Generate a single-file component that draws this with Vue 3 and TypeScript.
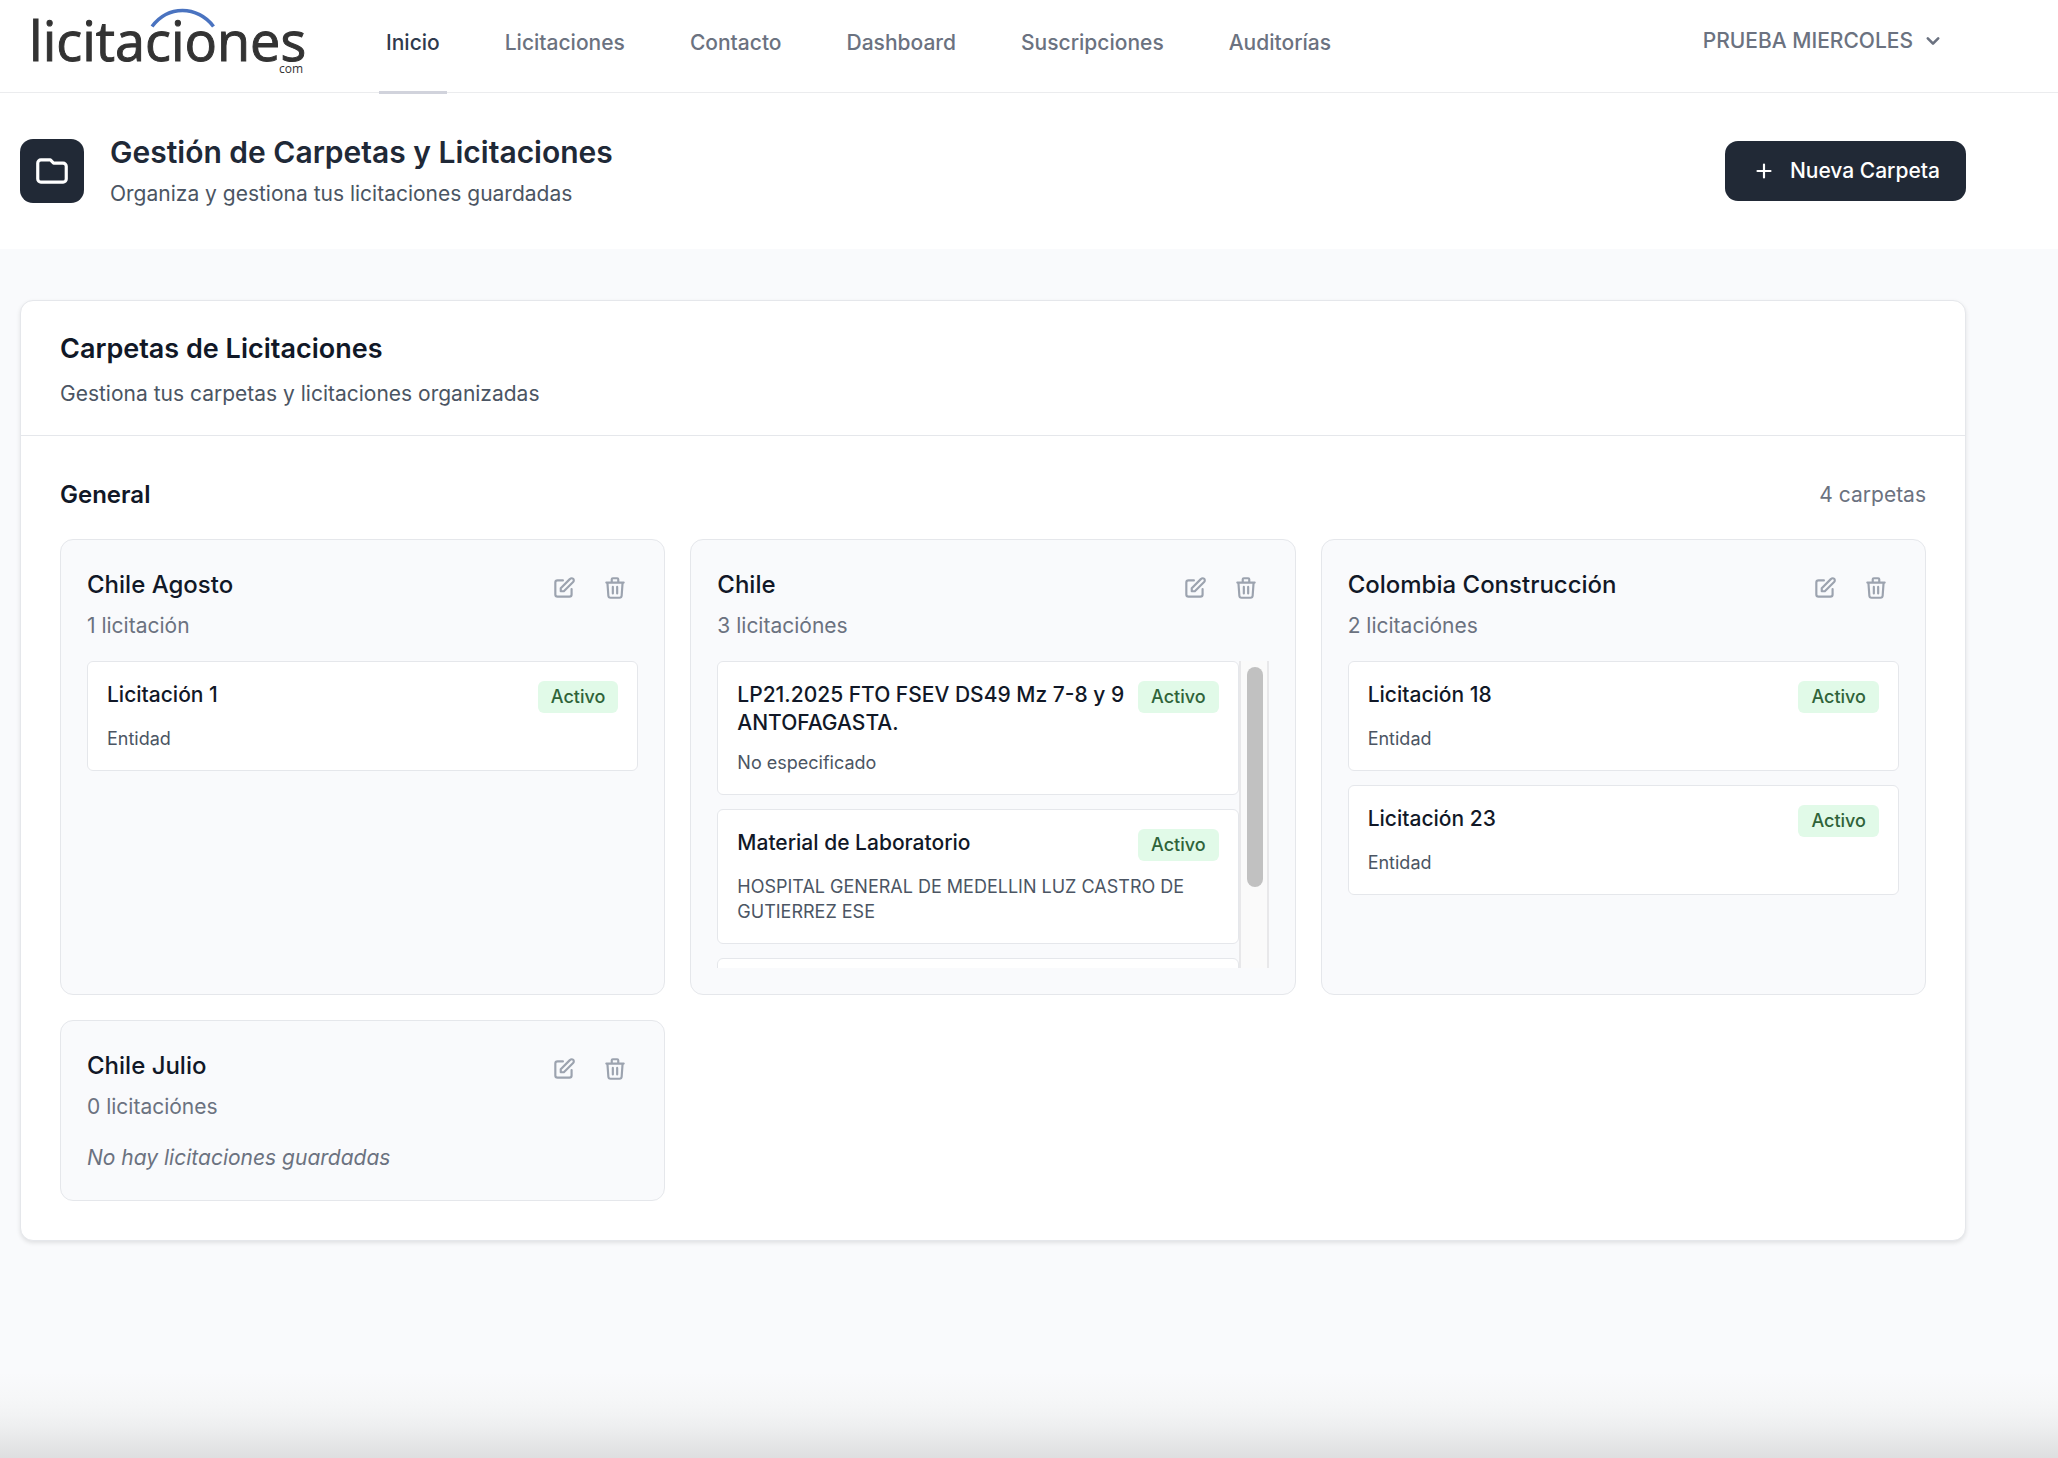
<script setup lang="ts">
interface Tender {
  title: string
  entity: string
}

interface Folder {
  name: string
  count: string
  tenders: Tender[]
  scrollable?: boolean
}

const links: string[] = ['Inicio', 'Licitaciones', 'Contacto', 'Dashboard', 'Suscripciones', 'Auditorías']

const folders: Folder[] = [
  { name: 'Chile Agosto', count: '1 licitación', tenders: [{ title: 'Licitación 1', entity: 'Entidad' }] },
  {
    name: 'Chile',
    count: '3 licitaciónes',
    scrollable: true,
    tenders: [
      { title: 'LP21.2025 FTO FSEV DS49 Mz 7-8 y 9 ANTOFAGASTA.', entity: 'No especificado' },
      { title: 'Material de Laboratorio', entity: 'HOSPITAL GENERAL DE MEDELLIN LUZ CASTRO DE GUTIERREZ ESE' },
      { title: '', entity: '' },
    ],
  },
  {
    name: 'Colombia Construcción',
    count: '2 licitaciónes',
    tenders: [
      { title: 'Licitación 18', entity: 'Entidad' },
      { title: 'Licitación 23', entity: 'Entidad' },
    ],
  },
  { name: 'Chile Julio', count: '0 licitaciónes', tenders: [] },
]
</script>

<template>
  <div class="page">
    <header class="topbar">
      <a class="logo" href="#" aria-label="licitaciones.com">
        <svg width="280" height="82" viewBox="0 0 280 82">
          <path d="M123 26.5C131 16 142 10.500 153.500 10.500S177 16 184.500 26.500" fill="none" stroke="#4a73c0" stroke-width="3.500" />
          <text class="logo-name" x="0" y="61">licitaciones</text>
          <text class="logo-tld" x="274" y="73" text-anchor="end">com</text>
        </svg>
      </a>
      <nav class="nav">
        <a v-for="(link, i) in links" :key="link" href="#" :class="['nav-link', { active: i === 0 }]">{{ link }}</a>
      </nav>
      <button type="button" class="user">
        PRUEBA MIERCOLES
        <svg width="26" height="26" viewBox="0 0 20 20" fill="currentColor">
          <path fill-rule="evenodd" clip-rule="evenodd" d="M5.293 7.293a1 1 0 011.414 0L10 10.586l3.293-3.293a1 1 0 111.414 1.414l-4 4a1 1 0 01-1.414 0l-4-4a1 1 0 010-1.414z" />
        </svg>
      </button>
    </header>

    <section class="heading">
      <div class="heading-icon">
        <svg class="icon" width="38" height="38" viewBox="0 0 24 24">
          <path d="M3 7v10a2 2 0 002 2h14a2 2 0 002-2V9a2 2 0 00-2-2h-6l-2-2H5a2 2 0 00-2 2z" />
        </svg>
      </div>
      <div class="heading-text">
        <h1>Gestión de Carpetas y Licitaciones</h1>
        <p>Organiza y gestiona tus licitaciones guardadas</p>
      </div>
      <button type="button" class="new-folder">
        <svg class="icon" width="26" height="26" viewBox="0 0 24 24">
          <path d="M12 6v12M6 12h12" />
        </svg>
        Nueva Carpeta
      </button>
    </section>

    <main>
      <section class="panel">
        <div class="panel-head">
          <h2>Carpetas de Licitaciones</h2>
          <p>Gestiona tus carpetas y licitaciones organizadas</p>
        </div>
        <div class="panel-body">
          <div class="group-head">
            <h3>General</h3>
            <span>4 carpetas</span>
          </div>
          <div class="grid">
            <article v-for="folder in folders" :key="folder.name" class="folder">
              <div class="folder-head">
                <div class="folder-text">
                  <h4>{{ folder.name }}</h4>
                  <p>{{ folder.count }}</p>
                </div>
                <button type="button" class="action" aria-label="Editar">
                  <svg class="icon" width="26" height="26" viewBox="0 0 24 24">
                    <path d="M11 5H6a2 2 0 00-2 2v11a2 2 0 002 2h11a2 2 0 002-2v-5m-1.414-9.414a2 2 0 112.828 2.828L11.828 15H9v-2.828l8.586-8.586z" />
                  </svg>
                </button>
                <button type="button" class="action" aria-label="Eliminar">
                  <svg class="icon" width="26" height="26" viewBox="0 0 24 24">
                    <path d="M19 7l-.867 12.142A2 2 0 0116.138 21H7.862a2 2 0 01-1.995-1.858L5 7m5 4v6m4-6v6m1-10V4a1 1 0 00-1-1h-4a1 1 0 00-1 1v3M4 7h16" />
                  </svg>
                </button>
              </div>
              <div v-if="folder.tenders.length" class="scroller">
                <ul class="tenders">
                  <li v-for="(tender, i) in folder.tenders" :key="i" class="tender">
                    <template v-if="tender.title">
                      <div class="tender-head">
                        <h5>{{ tender.title }}</h5>
                        <span class="badge">Activo</span>
                      </div>
                      <p>{{ tender.entity }}</p>
                    </template>
                  </li>
                </ul>
                <div v-if="folder.scrollable" class="track"><div class="thumb"></div></div>
              </div>
              <p v-else class="empty">No hay licitaciones guardadas</p>
            </article>
          </div>
        </div>
      </section>
    </main>
  </div>
</template>

<style>
body {
  margin: 0;
  background: #f9fafc;
}
</style>

<style scoped>
.page {
  display: flex;
  flex-direction: column;
  min-height: 100vh;
  font: 400 21px/32px Inter, 'Liberation Sans', sans-serif;
  color: #111827;
  background: linear-gradient(#f9fafc, #f6f7f8 30%, #f2f3f4 50%, #ebeced 70%, #e2e3e4 90%, #dedfe0) bottom / 100% 86px no-repeat #f9fafc;
}
h1, h2, h3, h4, h5, p, ul {
  margin: 0;
  padding: 0;
}
button {
  border: 0;
  background: none;
  padding: 0;
  font: inherit;
  cursor: pointer;
}
svg {
  display: block;
  flex: none;
}
.icon {
  fill: none;
  stroke: currentColor;
  stroke-width: 2;
  stroke-linecap: round;
  stroke-linejoin: round;
}

.topbar {
  position: relative;
  z-index: 1;
  display: flex;
  align-items: center;
  height: 82px;
  padding: 0 112px 10px 29px;
  border-bottom: 1px solid #ebecee;
  background: #fff;
}
.logo-name {
  font: 400 54px 'Open Sans', 'Noto Sans', sans-serif;
  fill: #333;
  stroke: #333;
  stroke-width: 1;
}
.logo-tld {
  font: 400 12px 'Open Sans', 'Noto Sans', sans-serif;
  fill: #333;
}
.nav {
  display: flex;
  align-self: stretch;
  gap: 51px;
  margin: 0 auto -12px 70px;
}
.nav-link {
  display: flex;
  align-items: center;
  padding: 0 7px 5px;
  border-bottom: 3px solid transparent;
  color: #6b7280;
  font-weight: 450;
  text-decoration: none;
}
.nav-link.active {
  border-color: #d1d3dc;
  color: #2f3a4d;
}
.user {
  display: flex;
  align-items: center;
  gap: 7px;
  color: #6b7280;
  font-weight: 450;
}

.heading {
  display: flex;
  align-items: center;
  padding: 39px 92px 39px 20px;
  background: #fff;
}
.heading-icon {
  display: grid;
  place-items: center;
  width: 64px;
  height: 64px;
  margin-right: 26px;
  border-radius: 13px;
  background: #212936;
  color: #fff;
}
.heading-text {
  flex: 1;
}
h1 {
  margin-bottom: 6px;
  font-size: 30px;
  line-height: 40px;
  font-weight: 600;
  color: #1f2937;
}
.heading-text p,
.panel-head p {
  color: #4b5563;
}
.new-folder {
  display: flex;
  align-items: center;
  gap: 13px;
  padding: 14px 26px;
  border-radius: 13px;
  background: #212936;
  color: #fff;
  font-weight: 450;
}

main {
  padding: 51px 92px 51px 20px;
}
.panel {
  border: 1px solid #e5e7eb;
  border-radius: 13px;
  background: #fff;
  box-shadow: 0 2px 4px rgba(0, 0, 0, 0.1);
}
.panel-head {
  padding: 25px 39px;
  border-bottom: 1px solid #e5e7eb;
}
h2 {
  margin-bottom: 6px;
  font-size: 27px;
  line-height: 46px;
  font-weight: 600;
}
.panel-body {
  padding: 39px;
}
.group-head {
  display: flex;
  align-items: center;
  justify-content: space-between;
  margin-bottom: 24px;
  color: #6b7280;
}
h3 {
  color: #111827;
  font-size: 24px;
  line-height: 40px;
  font-weight: 600;
}
.grid {
  display: grid;
  grid-template-columns: repeat(3, minmax(0, 1fr));
  gap: 25px;
}
.folder {
  padding: 26px;
  border: 1px solid #e5e7eb;
  border-radius: 13px;
  background: #f9fafc;
}
.folder-head {
  display: flex;
  align-items: flex-start;
  gap: 5px;
  margin-bottom: 19px;
}
.folder-text {
  flex: 1;
}
h4 {
  margin-bottom: 6px;
  font-size: 24px;
  line-height: 38px;
  font-weight: 450;
}
.folder-text p {
  color: #6b7280;
}
.action {
  padding: 9px 10px;
  color: #9ca3af;
}
.scroller {
  display: flex;
  max-height: 307px;
}
.tenders {
  flex: 1;
  overflow: hidden;
  list-style: none;
}
.tender {
  min-height: 72px;
  box-sizing: border-box;
  padding: 19px;
  border: 1px solid #e5e7eb;
  border-radius: 6px;
  background: #fff;
}
.tender + .tender {
  margin-top: 14px;
}
.tender-head {
  display: flex;
  align-items: flex-start;
  justify-content: space-between;
  gap: 10px;
  margin-bottom: 13px;
}
h5 {
  font-size: 21px;
  line-height: 28px;
  font-weight: 450;
}
.badge {
  padding: 0 13px;
  border-radius: 6px;
  background: #e1fae8;
  color: #2f6339;
  font-size: 18px;
  font-weight: 500;
}
.tender p {
  color: #4b5563;
  font-size: 18px;
  line-height: 25px;
}
.track {
  width: 26px;
  border: solid #e8e8ea;
  border-width: 0 2px;
  background: #fafafa;
}
.thumb {
  width: 16px;
  height: 220px;
  margin: 6px 0 0 6px;
  border-radius: 8px;
  background: #c1c1c1;
}
.empty {
  color: #6b7280;
  font-style: italic;
}
</style>
